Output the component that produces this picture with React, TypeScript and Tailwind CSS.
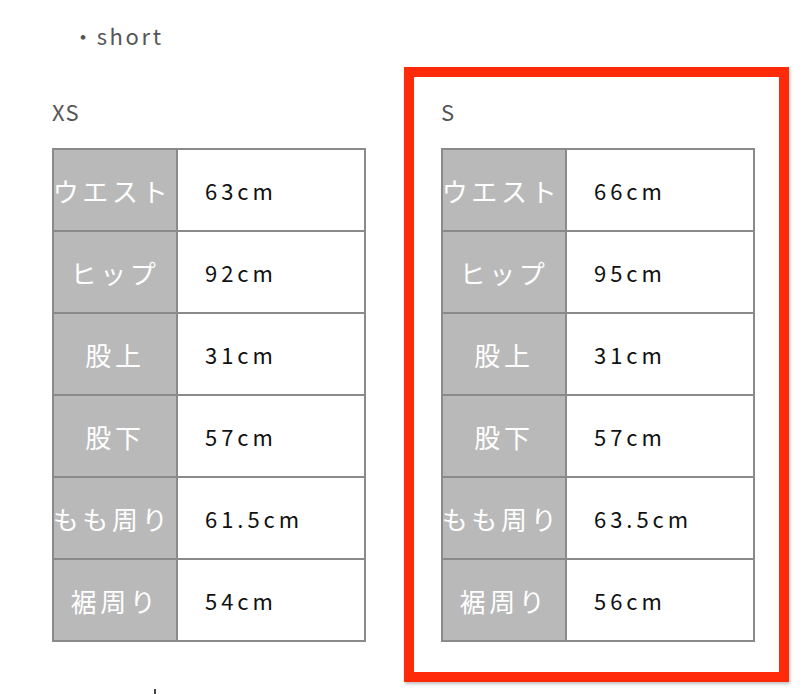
import React from 'react';

type Row = { label: string; value: string };

const xsRows: Row[] = [
  { label: 'ウエスト', value: '63cm' },
  { label: 'ヒップ', value: '92cm' },
  { label: '股上', value: '31cm' },
  { label: '股下', value: '57cm' },
  { label: 'もも周り', value: '61.5cm' },
  { label: '裾周り', value: '54cm' },
];

const sRows: Row[] = [
  { label: 'ウエスト', value: '66cm' },
  { label: 'ヒップ', value: '95cm' },
  { label: '股上', value: '31cm' },
  { label: '股下', value: '57cm' },
  { label: 'もも周り', value: '63.5cm' },
  { label: '裾周り', value: '56cm' },
];

// ── size table ────────────────────────────────────────────────────────────────
function SizeTable({ rows }: { rows: Row[] }) {
  return (
    <div className="w-[314px] border-t-2 border-l-2 border-[#8a8a8a] grid grid-cols-[124px_1fr]">
      {rows.map((r) => (
        <React.Fragment key={r.label}>
          <div className="h-[82px] border-r-2 border-b-2 border-[#8a8a8a] bg-[#b9b9b9] flex items-center justify-center text-white text-[26px] tracking-[0.14em] whitespace-nowrap">
            <span className={r.label.length > 3 ? 'ml-[-6px]' : ''}>{r.label}</span>
          </div>
          <div className="h-[82px] border-r-2 border-b-2 border-[#8a8a8a] bg-white flex items-center pl-[27px] text-[#111] text-[22px] tracking-[0.18em]">
            {r.value}
          </div>
        </React.Fragment>
      ))}
    </div>
  );
}

function SizeBlock({ title, rows, marked }: { title: string; rows: Row[]; marked?: boolean }) {
  return (
    <div
      className={
        marked
          ? 'w-[385px] h-[615px] border-[10px] border-[#ff2a0a] shadow-[1px_2px_3px_rgba(0,0,0,0.25)] pt-[17px] pl-[27px]'
          : 'w-[385px] h-[615px] border-[10px] border-transparent pt-[17px] pl-[27px]'
      }
    >
      <div className="h-[34px] leading-[34px] text-[22px] text-[#555] tracking-[0.05em] mb-[20px]">{title}</div>
      <SizeTable rows={rows} />
    </div>
  );
}

export default function App() {
  return (
    <div
      className="w-[812px] h-[694px] overflow-hidden bg-white"
      style={{ fontFamily: '"Noto Sans CJK JP", "Noto Sans", sans-serif' }}
    >
      <div className="h-[67px] pt-[19px] pl-[72px] text-[22px] leading-8 text-[#555] tracking-[0.12em]">
        ・short
      </div>
      <div className="flex">
        <div className="ml-[15px]">
          <SizeBlock title="XS" rows={xsRows} />
        </div>
        <div className="ml-[4px]">
          <SizeBlock title="S" rows={sRows} marked />
        </div>
      </div>
      <div className="ml-[154px] mt-[7px] w-[2px] h-[5px] bg-[#444]" />
    </div>
  );
}
